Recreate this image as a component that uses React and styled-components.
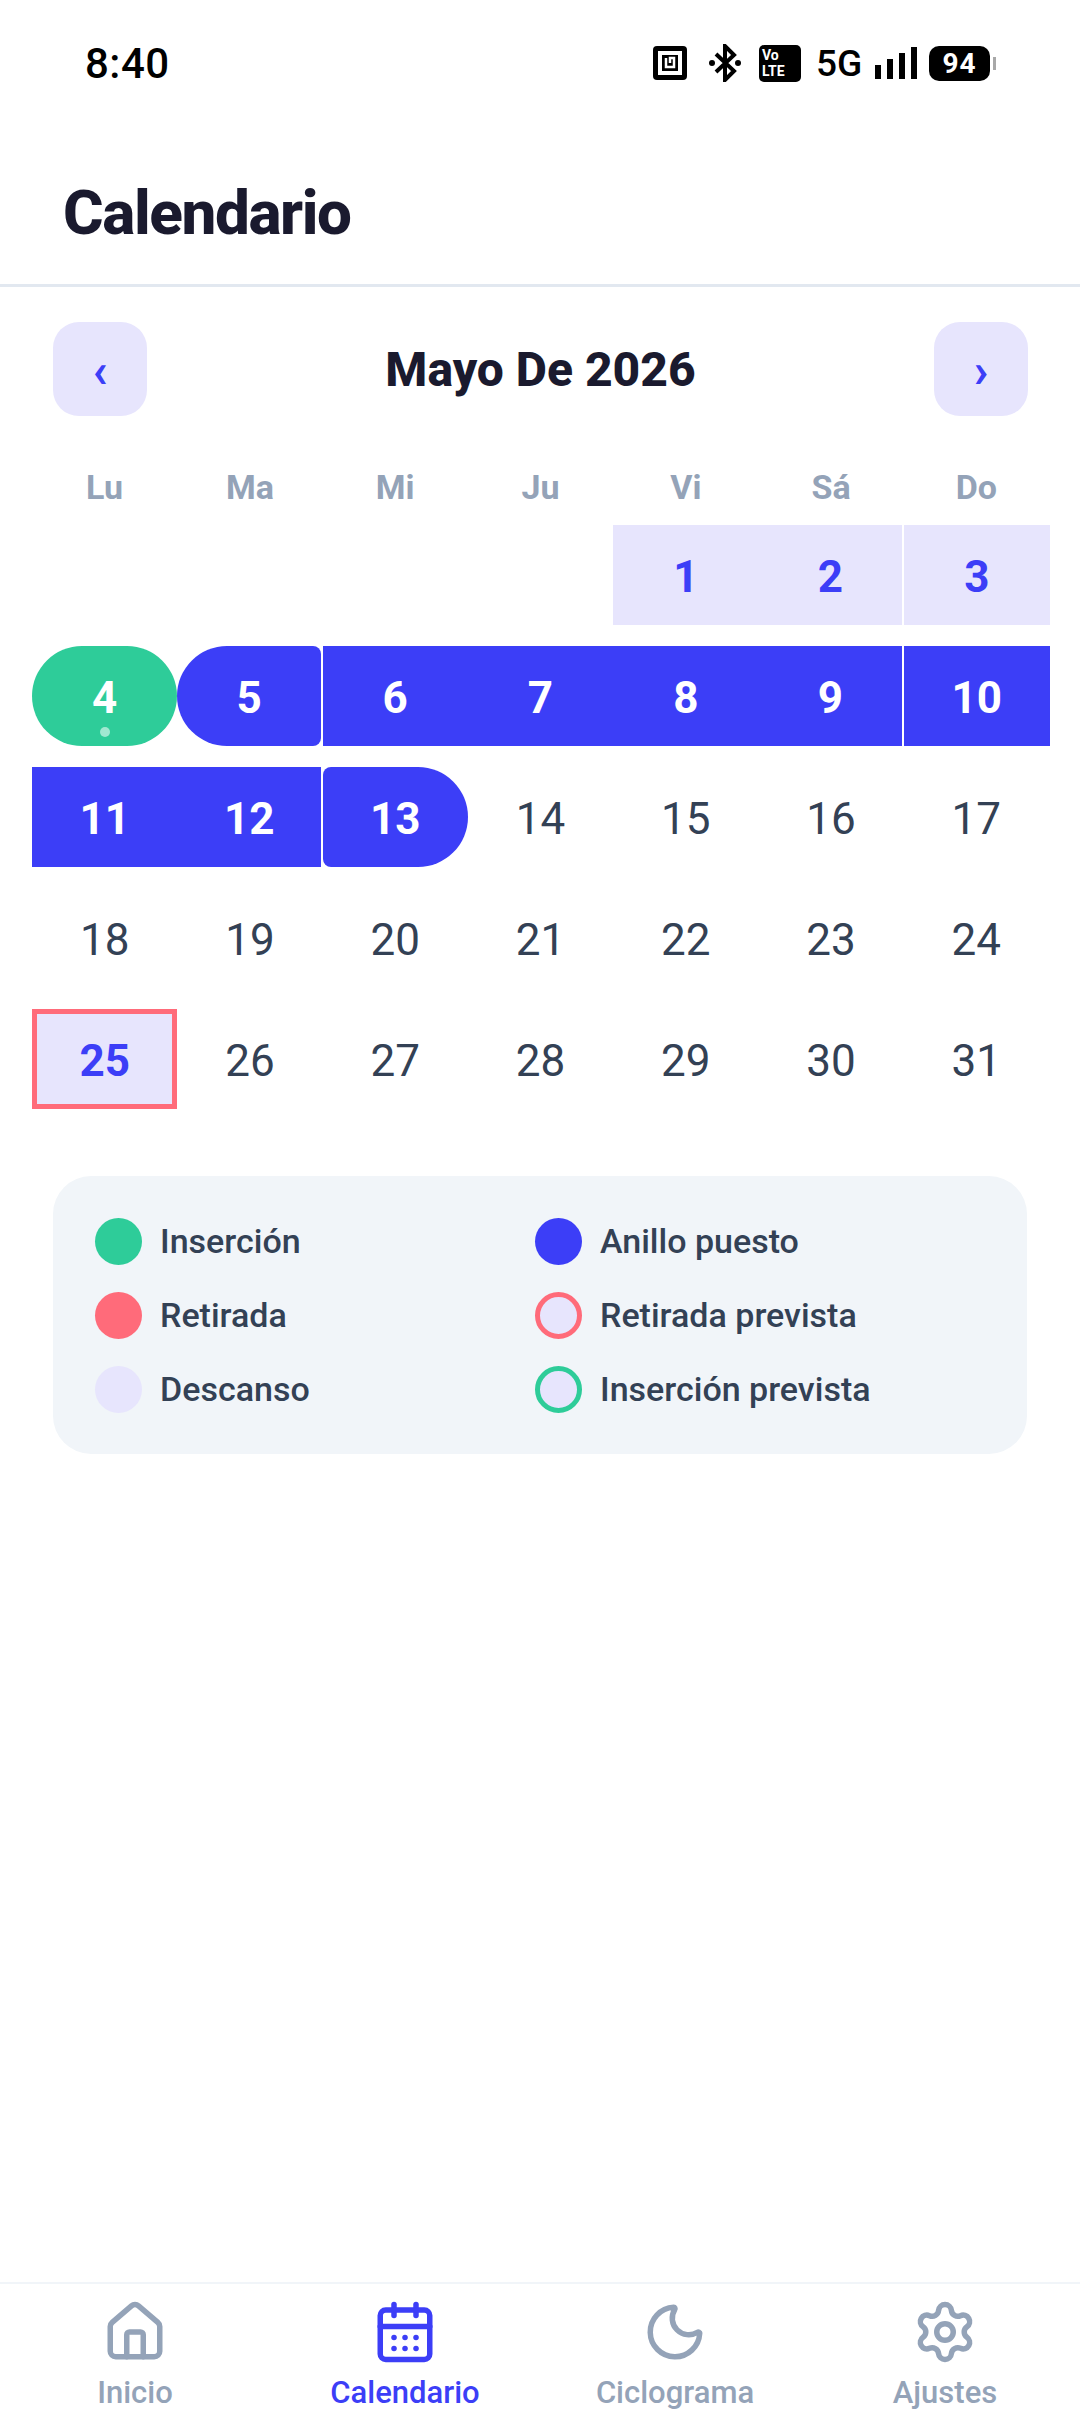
import React from 'react'
import styled, { createGlobalStyle } from 'styled-components'
import { House, CalendarDays, Moon, Settings } from 'lucide-react'

const BLUE = '#3c3ef7'
const GREEN = '#2ecc99'
const PINK = '#ff6b7a'
const LAVENDER = '#e7e5fd'
const SLATE = '#94a3b8'
const TEXT = '#334155'

const Global = createGlobalStyle`
  html, body { margin: 0; padding: 0; background: #fff; }
  body { font-family: Roboto, "Liberation Sans", sans-serif; }
  * { box-sizing: border-box; }
`

const Page = styled.div`
  width: 1080px;
  height: 2412px;
  display: flex;
  flex-direction: column;
  background: #fff;
  overflow: hidden;
`

const StatusBar = styled.div`
  height: 124px;
  padding: 2px 90px 0 85px;
  display: flex;
  align-items: center;
  justify-content: space-between;
  color: #000;
`
const Time = styled.span`
  font-size: 42px;
  font-weight: 500;
  letter-spacing: 0.5px;
`
const StatusIcons = styled.div`
  display: flex;
  align-items: center;
`
const VoLte = styled.div`
  width: 42px;
  height: 37px;
  margin: 0 15px 0 18px;
  padding: 2px 0 0 3px;
  background: #000;
  border-radius: 5px;
  color: #fff;
  font-size: 14px;
  font-weight: 700;
  line-height: 16px;
`
const FiveG = styled.span`
  font-size: 37px;
  font-weight: 500;
  width: 59px;
`
const Battery = styled.div`
  width: 61px;
  height: 35px;
  margin-left: 12px;
  background: #000;
  border-radius: 10px;
  color: #fff;
  font-size: 28px;
  font-weight: 700;
  letter-spacing: 1px;
  display: flex;
  align-items: center;
  justify-content: center;
  position: relative;
  &::after {
    content: '';
    position: absolute;
    right: -6px;
    top: 11px;
    width: 3px;
    height: 13px;
    background: #a8a8a8;
  }
`

const Header = styled.header`
  height: 163px;
  padding: 16px 0 0 63px;
  display: flex;
  align-items: center;
  border-bottom: 3px solid #e2e8f0;
`
const Title = styled.h1`
  margin: 0;
  font-size: 62px;
  font-weight: 800;
  letter-spacing: -1.4px;
  color: #1a1a2e;
`

const MonthNav = styled.div`
  margin-top: 35px;
  padding: 0 52px 0 53px;
  display: flex;
  align-items: center;
  justify-content: space-between;
`
const NavButton = styled.div`
  width: 94px;
  height: 94px;
  border-radius: 26px;
  background: ${LAVENDER};
  color: ${BLUE};
  font-size: 48px;
  font-weight: 700;
  line-height: 94px;
  text-align: center;
  padding-top: 2px;
`
const MonthTitle = styled.h2`
  margin: 0;
  font-size: 48px;
  font-weight: 800;
  color: #1a1a2e;
`

const Weekdays = styled.div`
  margin: 50px 31px 0 32px;
  height: 42px;
  display: grid;
  grid-template-columns: repeat(7, 1fr);
  align-items: center;
`
const Weekday = styled.div`
  text-align: center;
  font-size: 34px;
  font-weight: 700;
  color: ${SLATE};
`

const DayGrid = styled.div`
  margin: 17px 31px 0 32px;
  display: grid;
  grid-template-columns: repeat(7, 1fr);
  grid-auto-rows: 100px;
  row-gap: 21px;
`

const variants = {
  plain: `color: ${TEXT}; font-weight: 400;`,
  rest: `background: ${LAVENDER}; color: ${BLUE}; font-weight: 700;`,
  ring: `background: ${BLUE}; color: #fff; font-weight: 700;`,
  insert: `background: ${GREEN}; color: #fff; font-weight: 700; border-radius: 50px;`,
  today: `background: ${LAVENDER}; color: ${BLUE}; font-weight: 700; outline: 5px solid ${PINK}; outline-offset: -5px;`,
}

const Day = styled.div`
  position: relative;
  display: flex;
  align-items: center;
  justify-content: center;
  padding-top: 3px;
  font-size: 44px;
  ${({ $kind }) => variants[$kind]}
  ${({ $seam }) => $seam && 'margin-right: 1.5px;'}
  ${({ $wide }) => $wide && 'margin-right: -1px;'}
  ${({ $round }) => $round === 'left' && 'border-radius: 50px 8px 8px 50px;'}
  ${({ $round }) => $round === 'right' && 'border-radius: 8px 50px 50px 8px;'}
`
const TodayDot = styled.span`
  position: absolute;
  left: 50%;
  bottom: 9px;
  width: 10px;
  height: 10px;
  margin-left: -5px;
  border-radius: 50%;
  background: rgba(255, 255, 255, 0.55);
`

const Legend = styled.div`
  margin: 67px 53px 0;
  height: 278px;
  padding: 42px 42px 0;
  background: #f1f5f9;
  border-radius: 38px;
  display: grid;
  grid-template-columns: 440px 1fr;
  grid-auto-rows: 46px;
  row-gap: 28px;
`
const LegendItem = styled.div`
  display: flex;
  align-items: center;
  gap: 18px;
  font-size: 34px;
  font-weight: 500;
  color: ${TEXT};
`
const LegendDot = styled.span`
  width: 47px;
  height: 47px;
  border-radius: 50%;
  background: ${({ $fill }) => $fill};
  border: ${({ $ring }) => ($ring ? `5px solid ${$ring}` : 'none')};
`

const TabBar = styled.nav`
  margin-top: auto;
  height: 130px;
  padding-top: 15px;
  border-top: 2px solid #f1f5f9;
  display: grid;
  grid-template-columns: repeat(4, 270px);
`
const Tab = styled.div`
  display: flex;
  flex-direction: column;
  align-items: center;
  color: ${({ $active }) => ($active ? BLUE : SLATE)};
`
const TabLabel = styled.span`
  margin-top: 8px;
  font-size: 31px;
  font-weight: 500;
  line-height: 40px;
`

const weekdays = ['Lu', 'Ma', 'Mi', 'Ju', 'Vi', 'Sá', 'Do']

const kindOf = (d) => {
  if (d <= 3) return 'rest'
  if (d === 4) return 'insert'
  if (d <= 13) return 'ring'
  if (d === 25) return 'today'
  return 'plain'
}

const roundOf = (d) => (d === 5 ? 'left' : d === 13 ? 'right' : undefined)

const legend = [
  { label: 'Inserción', fill: GREEN },
  { label: 'Anillo puesto', fill: BLUE },
  { label: 'Retirada', fill: PINK },
  { label: 'Retirada prevista', fill: LAVENDER, ring: PINK },
  { label: 'Descanso', fill: LAVENDER },
  { label: 'Inserción prevista', fill: LAVENDER, ring: GREEN },
]

const tabs = [
  { label: 'Inicio', Icon: House },
  { label: 'Calendario', Icon: CalendarDays, active: true },
  { label: 'Ciclograma', Icon: Moon },
  { label: 'Ajustes', Icon: Settings },
]

function NfcIcon() {
  return (
    <svg width="34" height="34" viewBox="0 0 34 34">
      <rect x="0" y="0" width="34" height="34" rx="4" fill="#000" />
      <rect x="5" y="5" width="24" height="24" fill="#fff" />
      <rect x="9" y="9" width="16" height="16" fill="#000" />
      <path d="M13 12v9h8v-9h-4v5" fill="none" stroke="#fff" strokeWidth="2.5" />
    </svg>
  )
}

function BluetoothIcon() {
  return (
    <svg width="32" height="38" viewBox="0 0 32 38" style={{ marginLeft: 22 }}>
      <path d="M7 10l18 17-9 9V2l9 9L7 28" fill="none" stroke="#000" strokeWidth="4" />
      <circle cx="3" cy="19" r="3" fill="#000" />
      <circle cx="29" cy="19" r="3" fill="#000" />
    </svg>
  )
}

function SignalIcon() {
  return (
    <svg width="42" height="32" viewBox="0 0 42 32">
      <rect x="0" y="18" width="6" height="14" fill="#000" />
      <rect x="12" y="12" width="6" height="20" fill="#000" />
      <rect x="24" y="6" width="6" height="26" fill="#000" />
      <rect x="36" y="0" width="6" height="32" fill="#000" />
    </svg>
  )
}

function App() {
  const days = []
  for (let i = 0; i < 4; i++) days.push(<div key={`e${i}`} />)
  for (let d = 1; d <= 31; d++) {
    const col = (d + 3) % 7
    const kind = kindOf(d)
    days.push(
      <Day
        key={d}
        $kind={kind}
        $round={roundOf(d)}
        $seam={kind !== 'plain' && kind !== 'today' && (col === 1 || col === 5)}
        $wide={kind !== 'plain' && col === 6}
      >
        {d}
        {d === 4 && <TodayDot />}
      </Day>
    )
  }

  return (
    <Page>
      <Global />
      <StatusBar>
        <Time>8:40</Time>
        <StatusIcons>
          <NfcIcon />
          <BluetoothIcon />
          <VoLte>Vo<br />LTE</VoLte>
          <FiveG>5G</FiveG>
          <SignalIcon />
          <Battery>94</Battery>
        </StatusIcons>
      </StatusBar>
      <Header>
        <Title>Calendario</Title>
      </Header>
      <MonthNav>
        <NavButton>‹</NavButton>
        <MonthTitle>Mayo De 2026</MonthTitle>
        <NavButton>›</NavButton>
      </MonthNav>
      <Weekdays>
        {weekdays.map((w) => <Weekday key={w}>{w}</Weekday>)}
      </Weekdays>
      <DayGrid>{days}</DayGrid>
      <Legend>
        {legend.map((item) => (
          <LegendItem key={item.label}>
            <LegendDot $fill={item.fill} $ring={item.ring} />
            {item.label}
          </LegendItem>
        ))}
      </Legend>
      <TabBar>
        {tabs.map(({ label, Icon, active }) => (
          <Tab key={label} $active={active}>
            <Icon size={66} strokeWidth={2} />
            <TabLabel>{label}</TabLabel>
          </Tab>
        ))}
      </TabBar>
    </Page>
  )
}

export default App
